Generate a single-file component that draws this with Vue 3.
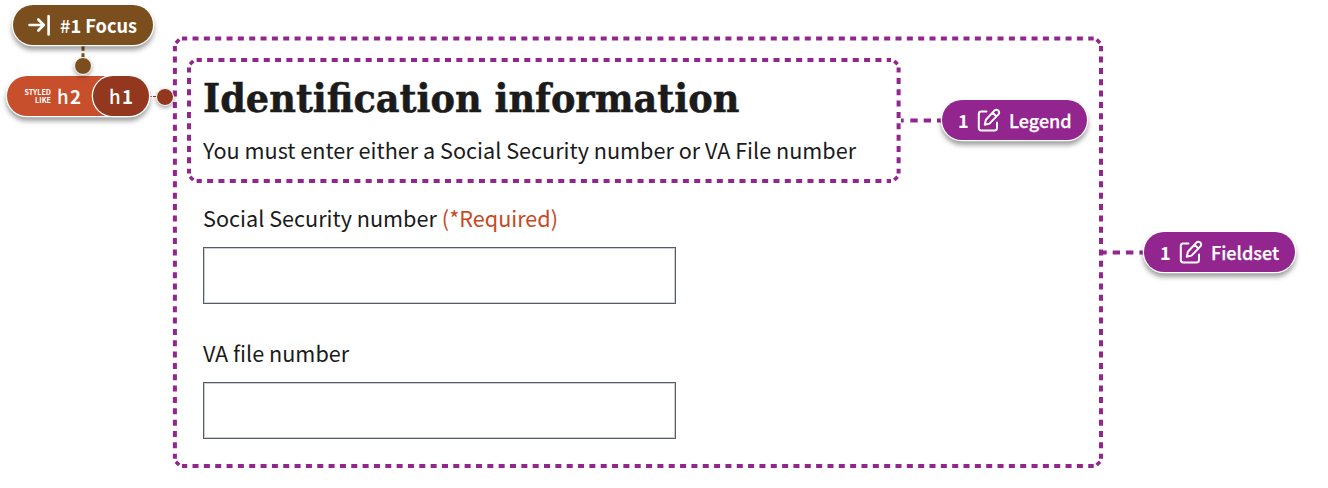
<script setup>
const frames = [
  { l: 174.9, r: 1101, t: 38.6, b: 466, x0: 182, x1: 1093.7, y0: 46, y1: 458.8, px: 11.338, py: 11.347 },
  { l: 189, r: 898.6, t: 60, b: 181, x0: 196.6, x1: 891, y0: 67.4, y1: 173.6, px: 11.327, py: 11.34 },
]
const inputs = [
  { label: 'Social Security number', required: '(*Required)', cls: 'ssn' },
  { label: 'VA file number', required: '', cls: 'file' },
]
const tags = [
  { name: 'Legend', cls: 'legend' },
  { name: 'Fieldset', cls: 'fieldset' },
]
</script>

<template>
  <main class="board">
    <section class="form">
      <h1><span>Identification information</span></h1>
      <p class="hint">You must enter either a Social Security number or VA File number</p>
      <div v-for="i in inputs" :key="i.label" class="field" :class="i.cls">
        <label><span class="name">{{ i.label }}</span><span v-if="i.required" class="req">{{ i.required }}</span></label>
        <div class="input"></div>
      </div>
    </section>

    <svg class="lines" width="1328" height="488" viewBox="0 0 1328 488" fill="none">
      <g stroke="#93258f" stroke-width="4">
        <g v-for="f in frames" :key="f.l">
          <path v-for="y in [f.t, f.b]" :key="y" :d="`M${f.x0} ${y}H${f.x1}`" :stroke-dasharray="`6 ${f.px - 6}`" stroke-dashoffset="0.8" />
          <path v-for="x in [f.l, f.r]" :key="x" :d="`M${x} ${f.y0}V${f.y1}`" :stroke-dasharray="`6 ${f.py - 6}`" stroke-dashoffset="0.8" />
          <path :d="`M${f.l + 1} ${f.t + 4.3}L${f.l + 4.3} ${f.t + 1}M${f.r - 1} ${f.t + 4.3}L${f.r - 4.3} ${f.t + 1}M${f.l + 1} ${f.b - 4.3}L${f.l + 4.3} ${f.b - 1}M${f.r - 1} ${f.b - 4.3}L${f.r - 4.3} ${f.b - 1}`" stroke-width="3.6" />
        </g>
        <path d="M901 120.4H903.7M910.3 120.4H917.7M923.7 120.4H931M937 120.4H943M1102 252.4H1106.7M1112.7 252.4H1120M1126 252.4H1133.4M1139.4 252.4H1146" />
      </g>
      <path d="M83 46V50.7M83 53.3V58" stroke="#7b4f1d" stroke-width="3" />
      <path d="M149 96.5H151.7M153 96.5H157" stroke="#93381f" stroke-width="1.2" />
    </svg>

    <div class="pill focus">
      <svg width="24" height="24" viewBox="0 0 24 24" fill="none" stroke="#fff" stroke-width="2.6" stroke-linecap="round" stroke-linejoin="round">
        <path d="M2.500 12H16.500M11.300 6.500L16.800 12L11.300 17.500" /><path d="M21.600 3V21.500" />
      </svg>
      <span><i>#</i>1 Focus</span>
    </div>
    <div class="pill heading">
      <span class="styled">STYLED<br>LIKE</span>
      <span class="level"><i>h</i>2</span>
      <div class="actual"><span class="level"><i>h</i>1</span></div>
    </div>
    <div class="dot brown"></div>
    <div class="dot red"></div>
    <div v-for="t in tags" :key="t.name" class="pill tag" :class="t.cls">
      <b>1</b>
      <svg width="24" height="24" viewBox="0 0 24 24" fill="none" stroke="#fff" stroke-width="2" stroke-linecap="round" stroke-linejoin="round">
        <path d="M9.500 3.600H4.200A2.400 2.400 0 0 0 1.800 6V20A2.400 2.400 0 0 0 4.200 22.400H17.600A2.400 2.400 0 0 0 20 20V14.500" />
        <path d="M17.400 2.600A2.700 2.700 0 0 1 21.400 6.400L12.500 15.600L7.800 16.800L8.900 11.800ZM15.600 4.700L19.300 8.400" />
      </svg>
      <span class="name">{{ t.name }}</span>
    </div>
  </main>
</template>

<style>
body { margin: 0; background: #fff; }
</style>

<style scoped>
.board { position: relative; width: 1328px; height: 488px; overflow: hidden; font-family: "Noto Sans CJK SC", "Noto Sans", sans-serif; color: #1b1b1b; }
.form { padding: 70px 0 0 203px; display: flex; flex-direction: column; }
h1 { margin: 0; height: 56px; font: bold 40px/56px "DejaVu Serif Condensed", "DejaVu Serif", serif; font-stretch: condensed; white-space: nowrap; }
h1 span { display: inline-block; transform: scaleX(1.02); transform-origin: left; -webkit-text-stroke: .5px #1b1b1b; }
.hint { margin: 9px 0 0; height: 30px; font-size: 21.63px; line-height: 30px; white-space: nowrap; }
.field { width: 473px; }
.ssn { margin-top: 38px; }
.file { margin-top: 34px; }
label { display: flex; height: 30px; gap: 5px; font-size: 21.63px; line-height: 30px; white-space: nowrap; }
.req { color: #c9481f; }
.input { box-sizing: border-box; height: 57px; margin-top: 14px; border: 1px solid #565c65; box-shadow: inset 0 0 0 1px rgba(86, 92, 101, .3); }
.file .input { margin-top: 14px; }
.lines { position: absolute; left: 0; top: 0; }
.pill { position: absolute; box-sizing: border-box; display: flex; align-items: center; height: 40px; border-radius: 20px; color: #fff; white-space: nowrap; box-shadow: 0 0 0 1.3px #fff, 0 4px 5px 1px rgba(0, 0, 0, .38); font-size: 18px; line-height: 26px; }
.pill > span { margin-top: -1px; }
i { font-style: normal; font-weight: 500; }
.focus { left: 13px; top: 5px; width: 140px; padding-left: 14px; gap: 9px; background: #7b4f1d; font-weight: 700; font-size: 18.2px; }
.heading { left: 7px; top: 76px; width: 142px; padding-left: 15px; background: #c84f2b; }
.pill > .styled { width: 29px; text-align: right; font-size: 7.2px; line-height: 8px; font-weight: 700; margin-top: 0; }
.level { margin-left: 6px; font-weight: 700; letter-spacing: 1.3px; font-size: 18.7px; }
.actual { position: absolute; right: 0; top: 0; box-sizing: border-box; width: 56px; height: 40px; box-shadow: 0 0 0 1.3px #fff; border-radius: 20px; background: #93381f; display: flex; align-items: center; padding-left: 10px; }
.dot { position: absolute; box-sizing: border-box; width: 18px; height: 18px; border: 1.4px solid #fff; border-radius: 50%; box-shadow: 0 2px 4px rgba(0, 0, 0, .35); }
.brown { left: 74px; top: 57px; background: #7b4f1d; }
.red { left: 156px; top: 88px; background: #93381f; }
.tag { background: #93258f; padding-left: 16px; font-weight: 500; }
.tag b { width: 11px; margin-top: -1px; }
.tag svg { margin: 0 8px 0 8px; }
.tag .name { -webkit-text-stroke: .25px #fff; }
.legend { left: 942px; top: 100px; width: 145px; }
.fieldset { left: 1144px; top: 232px; width: 151px; }
</style>
